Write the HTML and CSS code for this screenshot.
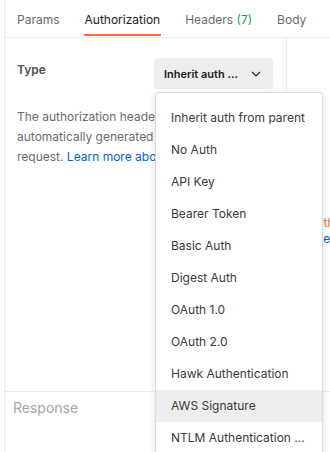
FILE: index.html
```html
<!DOCTYPE html>
<html>
<head>
<meta charset="utf-8">
<link rel="stylesheet" href="styles.css">
</head>
<body>
<div class="app">
  <div class="tabs">
    <div class="tab">Params</div>
    <div class="tab active">Authorization</div>
    <div class="tab">Headers <span class="count">(7)</span></div>
    <div class="tab">Body</div>
  </div>
  <div class="main">
    <div class="auth-left">
      <div class="type-row">
        <div class="type-label">Type</div>
        <div class="select">
          <span class="select-text">Inherit auth ...</span>
          <svg class="chev" width="10" height="6" viewBox="0 0 10 6"><path d="M1 1l4 4 4-4" fill="none" stroke="#212121" stroke-width="1.1"/></svg>
        </div>
      </div>
      <p class="desc">The authorization header will be automatically generated when you send the request. <a class="link">Learn more about authorization</a></p>
    </div>
    <div class="auth-right">
      <p class="note"><span class="warn">Auth</span><br><span class="blue">Use</span></p>
    </div>
  </div>
  <div class="response">Response</div>

  <div class="menu">
    <div class="item">Inherit auth from parent</div>
    <div class="item">No Auth</div>
    <div class="item">API Key</div>
    <div class="item">Bearer Token</div>
    <div class="item">Basic Auth</div>
    <div class="item">Digest Auth</div>
    <div class="item">OAuth 1.0</div>
    <div class="item">OAuth 2.0</div>
    <div class="item">Hawk Authentication</div>
    <div class="item hover">AWS Signature</div>
    <div class="item">NTLM Authentication ...</div>
  </div>
</div>
</body>
</html>
```

FILE: styles.css
```css
* { box-sizing: border-box; }
html, body { margin: 0; padding: 0; background: #fff; }
body {
  font-family: Inter, "Noto Sans", sans-serif;
  color: #212121;
  width: 330px;
  height: 452px;
  overflow: hidden;
}
.app {
  position: relative;
  margin-left: 4px;
  border-left: 1px solid #ededed;
  height: 452px;
  display: flex;
  flex-direction: column;
}
.tabs {
  height: 38px;
  border-bottom: 1px solid #ededed;
  display: flex;
  gap: 25px;
  padding-left: 12px;
  white-space: nowrap;
}
.tab {
  font-size: 12px;
  color: #6b6b6b;
  height: 37px;
  line-height: 36px;
  padding-top: 2px;
  position: relative;
}
.tab.active { color: #212121; }
.tab.active::after {
  content: "";
  position: absolute;
  left: -1px; right: -1px;
  bottom: 1px;
  height: 2px;
  background: #ff6c37;
}
.count { color: #1d9c55; }
.main {
  display: flex;
  height: 353px;
}
.auth-left {
  width: 282px;
  flex: none;
  border-right: 1px solid #ededed;
  padding: 20px 12px 0 12px;
}
.type-row {
  display: flex;
  justify-content: space-between;
  align-items: flex-start;
}
.type-label {
  font-size: 12px;
  font-weight: 600;
  color: #505050;
  padding-top: 4px;
}
.select {
  width: 119px;
  height: 31px;
  background: #ededed;
  border-radius: 4px;
  display: flex;
  align-items: center;
  padding: 0 0 0 10px;
  margin-right: 1px;
}
.select-text {
  font-size: 11px;
  font-weight: 600;
  color: #212121;
  width: 87px;
}
.chev { display: block; }
.desc {
  margin: 18px 0 0;
  font-size: 12px;
  line-height: 20px;
  color: #6b6b6b;
}
.link { color: #0265d2; }
.auth-right {
  flex: 1;
  padding: 177px 0 0 21px;
  overflow: hidden;
}
.note {
  margin: 0;
  font-size: 12px;
  line-height: 16px;
  white-space: nowrap;
}
.warn { color: #e07a33; }
.blue { color: #0265d2; }
.response {
  border-top: 1px solid #ededed;
  flex: 1;
  font-size: 14px;
  color: #a6a6a6;
  padding: 7px 0 0 8px;
}
.menu {
  position: absolute;
  left: 150px;
  top: 92px;
  width: 168px;
  background: #fff;
  border: 1px solid #dcdcdc;
  border-radius: 4px;
  box-shadow: 0 2px 6px rgba(0,0,0,0.15);
  padding-top: 9px;
}
.item {
  height: 32px;
  line-height: 32px;
  padding-left: 15px;
  font-size: 12px;
  color: #3a3a3a;
  white-space: nowrap;
}
.item.hover { background: #ededed; }
```
